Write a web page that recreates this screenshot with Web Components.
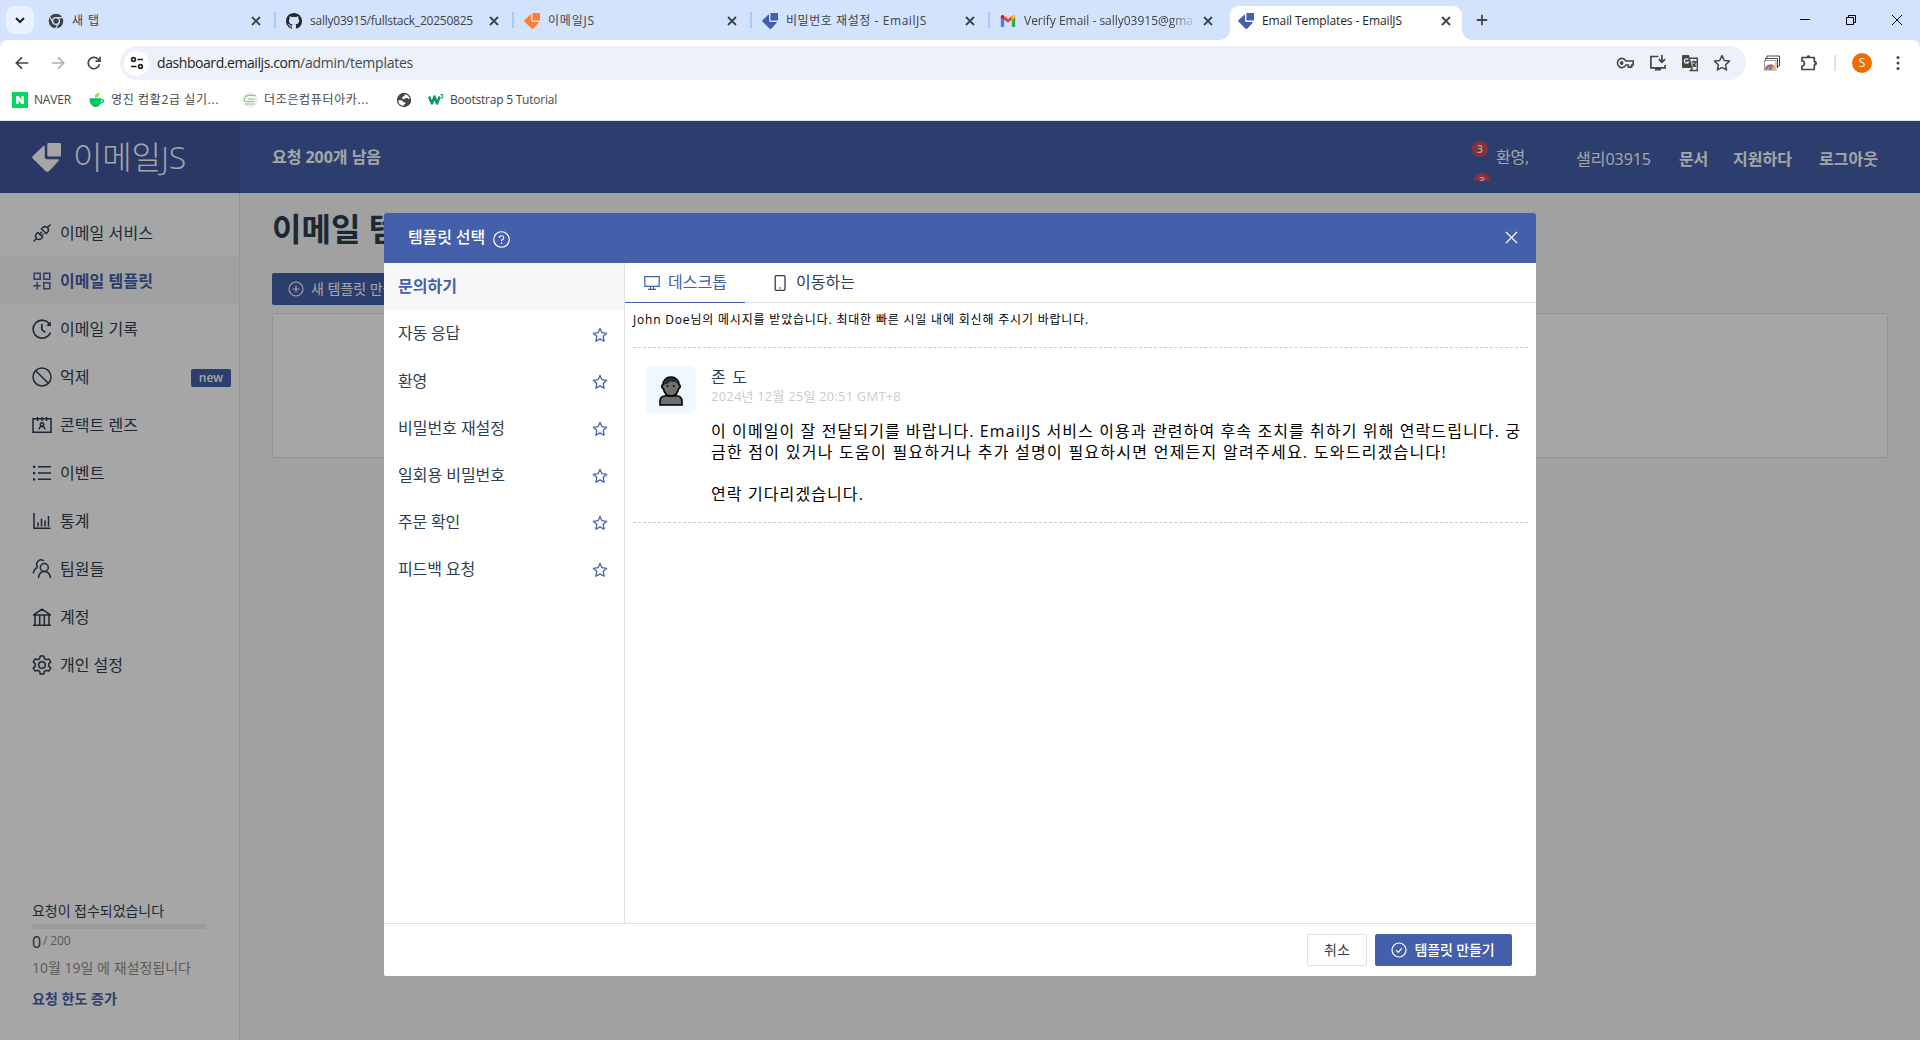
<!DOCTYPE html>
<html lang="ko">
<head>
<meta charset="utf-8">
<title>Email Templates - EmailJS</title>
<style>
html,body{margin:0;height:100%;overflow:hidden}
body{font-family:"Open Sans","Noto Sans CJK KR",sans-serif;color:#2c3e50;font-size:16px}
</style>
</head>
<body>
<browser-window></browser-window>
<script>
const define = (name, html, init) => customElements.define(name, class extends HTMLElement {
  connectedCallback() {
    if (this.shadowRoot) return;
    const root = this.attachShadow({mode: 'open'});
    const t = document.createElement('template');
    t.innerHTML = typeof html === 'function' ? html(this) : html;
    root.appendChild(t.content.cloneNode(true));
    if (init) init(this, root);
  }
});

/* Single-line label tracked out to the width given in "w". */
define('fit-text', '<style>:host{display:inline-block;white-space:pre;line-height:1.4;flex:none}</style><slot></slot>', el => {
  const w = parseFloat(el.getAttribute('w'));
  if (!w) return;
  const natural = el.getBoundingClientRect().width;
  el.style.letterSpacing = ((w - natural) / el.textContent.length).toFixed(3) + 'px';
});

const S = 'fill="none" stroke="currentColor" ';
const logo = '<rect x="15.3" y="0" width="13.7" height="13.6" rx="1"/><path d="M10.8 3.4Q12.8 1.8 12.8 4V13.8Q12.8 16.3 15.2 16.3H25.5Q28 16.3 26.3 18.2L17.2 28Q15.3 29.7 13.4 28L.8 15.6Q-.5 14.3 .8 13Z"/>';
const ICONS = {
  logo: ['29 29', logo],
  chevron: ['16 16', `<path ${S} stroke-width="2" d="M4 6l4 4 4-4"/>`],
  close: ['16 16', `<path ${S} stroke-width="1.8" d="M4 4l8 8M12 4l-8 8"/>`],
  plus: ['16 16', `<path ${S} stroke-width="1.8" d="M8 2.8v10.4M2.8 8h10.4"/>`],
  min: ['16 16', `<path ${S} d="M3 7.5h10"/>`],
  restore: ['16 16', `<path ${S} d="M3.5 5.5h7v7h-7zM5.5 5.5v-2h7v7h-2"/>`],
  wclose: ['16 16', `<path ${S} d="M3 3l10 10M13 3L3 13"/>`],
  chrome: ['16 16', '<circle cx="8" cy="8" r="7.3"/><g fill="none" stroke="#d3e3fd"><circle cx="8" cy="8" r="3.4" stroke-width="1.3"/><path stroke-width="1.1" d="M8 4.6h6.6M5 9.6L1.8 4M11 9.6L7.6 15.4"/></g>'],
  github: ['16 16', '<path fill-rule="evenodd" d="M8 0C3.58 0 0 3.58 0 8c0 3.54 2.29 6.53 5.47 7.59.4.07.55-.17.55-.38 0-.19-.01-.82-.01-1.49-2.01.37-2.53-.49-2.69-.94-.09-.23-.48-.94-.82-1.13-.28-.15-.68-.52-.01-.53.63-.01 1.08.58 1.23.82.72 1.21 1.87.87 2.33.66.07-.52.28-.87.51-1.07-1.78-.2-3.64-.89-3.64-3.95 0-.87.31-1.59.82-2.15-.08-.2-.36-1.02.08-2.12 0 0 .67-.21 2.2.82a7.6 7.6 0 014 0c1.53-1.04 2.2-.82 2.2-.82.44 1.1.16 1.92.08 2.12.51.56.82 1.27.82 2.15 0 3.07-1.87 3.75-3.65 3.95.29.25.54.73.54 1.48 0 1.07-.01 1.93-.01 2.2 0 .21.15.46.55.38A8.01 8.01 0 0016 8c0-4.42-3.58-8-8-8z"/>'],
  gmail: ['16 16', '<path fill="#4285f4" d="M.8 4v9.2q0 .8.8.8h2.6V6.6z"/><path fill="#34a853" d="M15.2 4v9.2q0 .8-.8.8h-2.6V6.6z"/><path fill="#ea4335" d="M4.2 6.8V2.9L8 5.9l3.8-3v3.9L8 9.8z"/><path fill="#c5221f" d="M.8 3.8v1L4.2 7V2.9L3.4 2.3C2.3 1.5.8 2.3.8 3.8z"/><path fill="#fbbc04" d="M15.2 3.8v1L11.8 7V2.9l.8-.6c1.1-.8 2.6 0 2.6 1.500z"/>'],
  back: ['16 16', `<path ${S} stroke-width="1.7" d="M14.300 8H2.500M8 2.300L2.300 8 8 13.700"/>`],
  forward: ['16 16', `<path ${S} stroke-width="1.7" d="M1.700 8h11.800M8 2.300L13.700 8 8 13.700"/>`],
  reload: ['16 16', `<path ${S} stroke-width="1.700" d="M13.500 9.300A5.700 5.700 0 1112 4l1.800 1.900M14 1.700V6.200H9.500"/>`],
  tune: ['16 16', `<g ${S} stroke-width="1.600"><circle cx="4.500" cy="4.500" r="1.900"/><path d="M8.500 4.500H14M2 11.500h5.500"/><circle cx="11.500" cy="11.500" r="1.900"/></g>`],
  key: ['20 16', `<g ${S} stroke-width="1.700"><path d="M10.300 6A4.600 4.600 0 1010.300 10H13v2.200h3.400V10h1.700V6z"/></g><circle cx="6" cy="8" r="1.900"/>`],
  install: ['18 18', `<path ${S} stroke-width="1.700" d="M9.500 2.500H1.900v11.300h14.200V11M12.900 1v7M9.700 5.200l3.200 3.200 3.200-3.200"/><path d="M6 14h6v2.500H6z"/>`],
  translate: ['18 18', `<path d="M2 1h6l3.500 13H2.200Q1 14 1 12.800V2.200Q1 1 2 1z"/><path ${S} stroke-width="1.400" d="M9 4.200h7.300V16.500H9.500l2-2.500M10.500 8h5M13 6.500V8M15 8q-1 3-3.500 4.500M11.500 9.500q1.500 2 3.500 3"/><path fill="none" stroke="#edf1fa" stroke-width="1.200" d="M7.300 5.700A2.200 2.200 0 107.500 8H5.500"/>`],
  star: ['16 16', `<path ${S} stroke-width="1.300" stroke-linejoin="round" d="M8 1.400l2 4.300 4.700.6-3.500 3.200.9 4.700L8 11.900l-4.100 2.300.9-4.700L1.300 6.300 6 5.700z"/>`],
  photos: ['18 18', `<path ${S} d="M4 4.500V2h12.500v10H14M2.500 7V4.500H14.500V14" stroke="#777"/><rect x="1.500" y="6.500" width="11.500" height="9.500" fill="#fff" stroke="#999"/><path fill="none" stroke="#ea4335" stroke-width="2.200" d="M3.500 15a4 4 0 017.500-1.500"/><path fill="#34a853" d="M2.500 12l2 4h-2z"/><path fill="#fbbc04" d="M10 12l2 1v3H9z"/><circle cx="7.300" cy="14.300" r="2" fill="#4285f4"/>`],
  puzzle: ['18 18', `<path ${S} stroke-width="1.700" stroke-linejoin="round" d="M2 3.500h12.300v4a1.700 1.700 0 010 3.500v4.500H2V12a2.500 2.500 0 000-5z"/><path d="M6.500 3.500a1.900 2.300 0 013.800 0zM14.500 7.400a2.300 1.900 0 010 3.800z"/>`],
  dots: ['16 16', '<circle cx="8" cy="2.600" r="1.500"/><circle cx="8" cy="8" r="1.500"/><circle cx="8" cy="13.400" r="1.500"/>'],
  naver: ['16 16', '<rect width="16" height="16" fill="#03d85c"/><path fill="#fff" d="M4 4h2.600l2.800 4V4H12v8H9.400L6.600 8v4H4z"/>'],
  cup: ['16 16', '<path fill="#8be04e" d="M6 5.500Q5 2 10.500.8 10.500 4 8 5.500z"/><path fill="#00c660" d="M.5 6.200H12V7q3.200-.4 3.200 2T11.500 11.500Q10 15 6.300 15 .5 14 .5 6.200zM12 8.300V10q1.700 0 1.700-1T12 8.300z"/>'],
  academy: ['16 16', '<circle cx="8" cy="8" r="7" fill="#f7faf5" stroke="#e4eae2"/><path fill="none" stroke="#8fba8a" stroke-width="1.100" d="M14 4Q5 1.500 2.800 6T7 9.500h5.500M3 12h9.500M6 7h7"/>'],
  globe: ['16 16', '<circle cx="8" cy="8" r="7.200"/><path fill="#fff" d="M8.500 2.300Q13 3 13.700 7q-1.700.4-2.200-1H9.700Q9 7.500 7.500 7.300L5.700 6Q6.500 4.300 8.500 4zM2.200 8.300H5q2 .2 2.300 2h2v1.500q-1.500.5-1.800 2.200Q2.600 13.400 2.200 8.300z"/>'],
  w3: ['16 16', '<path fill="none" stroke="#059862" stroke-width="2.400" stroke-linejoin="round" d="M1 4.500l3 7 2.500-7 2.500 7 2.700-7"/><path fill="none" stroke="#059862" stroke-width="1" d="M12.500 2.500h2.500l-1.300 1.500q1.500.2 1.300 1.500-.7 1.300-2.300.5"/>'],
  plug: ['20 20', `<g ${S} stroke-width="1.400"><path d="M1.500 18.500l3-3M15.500 4.500l3-3M4.500 15.500q-2-2.500-.2-4.500l1.600-1.600 4.700 4.700-1.600 1.600q-2 1.800-4.500-.2zM15.500 4.500q2 2.500.2 4.500l-1.600 1.600-4.700-4.700L11 4.300q2-1.800 4.500.2zM7.500 11l2-2M9.400 12.700l2-2"/></g>`],
  template: ['20 20', `<path ${S} stroke-width="1.500" d="M2.200 2.200h6v6h-6zM11.800 2.200h6v6h-6zM11.800 11.800h6v6h-6zM5.200 11v7.500M1.200 14.800h7.500"/>`],
  history: ['20 20', `<path ${S} stroke-width="1.600" d="M17.500 5A9 9 0 1018.500 13.500M9.800 5v5.700l3.500 2.600"/><path d="M18.800 2.500v4.800l-4.500-.6z"/>`],
  ban: ['20 20', `<g ${S} stroke-width="1.500"><circle cx="10" cy="10" r="9"/><path d="M3.700 3.700l12.600 12.600"/></g>`],
  contact: ['20 20', `<g ${S} stroke-width="1.500"><path d="M1 3.800h18v13.400H1zM5.500 2v4M10 2v4M14.500 2v4" /><circle cx="10" cy="9.500" r="1.700"/><path stroke-width="1.300" d="M7 14.500q.2-3 3-3t3 3"/></g>`],
  list: ['20 20', `<path ${S} stroke-width="1.500" d="M6 3.700h13M6 10h13M6 16.300h13"/><path d="M1 2.700h2.200v2.200H1zM1 9h2.200v2.200H1zM1 15.300h2.200v2.200H1z"/>`],
  chart: ['20 20', `<path ${S} stroke-width="1.500" d="M2 2v15.300h16.500M6 15.500v-4M9.500 15.500V7.500M13 15.500V9.500M16.500 15.500V5"/>`],
  team: ['20 20', `<g ${S} stroke-width="1.500"><circle cx="12.300" cy="8.500" r="4"/><path d="M6.500 19q.5-6.500 5.800-6.500T18.500 19M12 2Q8.500-.5 6 2.200T5.500 8.500M5.500 8.500Q1.800 10 1.300 14.500"/></g>`],
  bank: ['20 20', `<path ${S} stroke-width="1.500" d="M1 18.300h18M1 8h18M2 7.700L10 2.200l8 5.500M3 8v10M7.700 8v10M12.300 8v10M17 8v10"/>`],
  gear: ['20 20', `<g ${S} stroke-width="1.500" stroke-linejoin="round"><circle cx="10" cy="10" r="3.300"/><path d="M8.200 1h3.600l.6 2.700 1.700 1 2.700-.8 1.900 3.100-2 1.900v2.200l2 1.900-1.900 3.100-2.700-.8-1.700 1-.6 2.700H8.200l-.6-2.700-1.700-1-2.700.8-1.900-3.100 2-1.900V8.900l-2-1.900 1.900-3.100 2.700.8 1.700-1z"/></g>`],
  pluscircle: ['16 16', `<g ${S} stroke-width="1.100"><circle cx="8" cy="8" r="7"/><path d="M8 4.700v6.600M4.700 8h6.600"/></g>`],
  checkcircle: ['16 16', `<g ${S} stroke-width="1.200"><circle cx="8" cy="8" r="7"/><path d="M5 8.200l2.200 2.200 3.800-4.200"/></g>`],
  help: ['16 16', `<g ${S} stroke-width="1.100"><circle cx="8" cy="8" r="7.300"/><path d="M5.900 6.600Q5.900 4.500 8 4.500T10.100 6.400Q10.100 7.600 8.800 8.100 8 8.500 8 9.700"/></g><circle cx="8" cy="11.600" r=".75"/>`],
  dialogx: ['16 16', `<path ${S} stroke-width="1.500" d="M2 2l12 12M14 2L2 14"/>`],
  desktop: ['16 16', `<path ${S} stroke-width="1.200" d="M.8 1.700h14.400v9.600H.8zM4 14.300h8M6.500 11.300v3M9.500 11.300v3"/>`],
  phone: ['16 16', `<rect x="3.200" y=".7" width="9.800" height="14.600" rx="1" ${S} stroke-width="1.300"/><circle cx="8" cy="13" r=".8"/>`],
  person: ['24 30', '<g stroke="#000" stroke-width="1.600"><path fill="#707070" d="M1 29v-3.500Q1 20 7 19.800h10q6 .2 6 5.700V29z"/><path fill="#707070" d="M12 1c4.700 0 8 3.300 8 7.800 1.700 0 1.700 3.500-.3 3.700C18.800 17 15.800 20 12 20s-6.800-3-7.700-7.500c-2-.2-2-3.700-.3-3.700C4 4.300 7.300 1 12 1z"/></g><path fill="#2b2b2b" d="M4.600 8.500Q5 1.800 12 1.700t7.400 6.800Q18 8 16.800 5.700 14 6.500 11.500 5.300 9.500 8.300 4.600 8.500z"/><circle cx="8.600" cy="10" r=".9"/><circle cx="14.800" cy="10" r=".9"/>']
};
define('ui-icon', el => {
  const [box, body] = ICONS[el.getAttribute('name')];
  const w = el.getAttribute('w') || 16, h = el.getAttribute('h') || w;
  return `<style>:host{display:inline-flex;flex:none}svg{display:block}</style><svg width="${w}" height="${h}" viewBox="0 0 ${box}" preserveAspectRatio="none" fill="currentColor">${body}</svg>`;
});

define('browser-tab', `<style>
:host{display:flex;align-items:center;box-sizing:border-box;width:238px;height:34px;padding-left:11px;margin-top:6px;position:relative;font-size:12px;color:#3f4246;flex:none}
.label{flex:1;padding-left:8px;min-width:0;overflow:hidden;display:flex;height:20px;align-items:center}
.x{margin-right:10px;color:#3f4246}
.sep{width:2px;height:16px;background:#a8c7fa;margin:0 -1px 6px 0}
ui-icon,::slotted(ui-icon){margin-bottom:5px}
.label{margin-bottom:4px}
:host([active]){width:232px;margin-left:3px;padding-left:8px;background:#fff;border-radius:9px 9px 0 0;color:#1f1f1f}
:host([active]) .sep{visibility:hidden}
:host([active]) .x{margin-right:7px}
:host([active])::before,:host([active])::after{content:"";position:absolute;bottom:0;width:10px;height:10px;left:-10px;background:radial-gradient(circle at 0 0,transparent 9.500px,#fff 10px)}
:host([active])::after{left:auto;right:-10px;background:radial-gradient(circle at 100% 0,transparent 9.500px,#fff 10px)}
:host([last]) .sep{visibility:hidden}
:host([fade]) .label{-webkit-mask-image:linear-gradient(90deg,#000 154px,transparent 182px)}
</style><slot name="icon"></slot><div class="label"><slot></slot></div><ui-icon class="x" name="close"></ui-icon><div class="sep"></div>`);

define('browser-chrome', `<style>
:host{display:block;background:#fff;height:121px;color:#444746}
.strip{display:flex;height:40px;background:#d3e3fd}
.search{width:28px;height:28px;margin:6px 3px 0 6px;border-radius:9px;background:#e9f1fe;display:flex;align-items:center;justify-content:center;color:#1f1f1f}
.new{margin:12px 0 0 12px;color:#444}
.win{margin-left:auto;display:flex;gap:30px;padding:12px 15px 0 0;color:#000}
.barwrap{background:#d3e3fd}
.bar{display:flex;height:46px;background:#fff;border-radius:8px 8px 0 0;align-items:center}
.nav{display:flex;gap:20px;padding-left:14px;width:106px;flex:none}
.omni{box-sizing:border-box;width:1626px;height:34px;border-radius:17px;background:#edf1fa;display:flex;align-items:center;padding:0 15px 0 4px;font-size:14px;color:#1f1f1f}
.site{width:25px;height:25px;border-radius:50%;background:#fff;display:flex;align-items:center;justify-content:center;margin-right:8px}
.acts{margin-left:auto;display:flex;align-items:center;gap:14px;color:#444746}
.right{display:flex;align-items:center;padding-left:17px}
.av{width:20px;height:20px;border-radius:50%;background:#ef6c00;color:#fff;font:12px/20px "Open Sans",sans-serif;text-align:center}
.marks{display:flex;align-items:center;height:24px;padding-left:12px;font-size:12px;padding-top:2px}
.marks ui-icon{margin-right:6px}
.line{height:1px;background:#e0e4ea;margin-top:8px}
</style>
<div class="strip"><div class="search"><ui-icon name="chevron"></ui-icon></div>
<browser-tab><ui-icon slot="icon" name="chrome"></ui-icon><fit-text w="28">새 탭</fit-text></browser-tab>
<browser-tab><ui-icon slot="icon" name="github" style="color:#24292f"></ui-icon><fit-text w="163">sally03915/fullstack_20250825</fit-text></browser-tab>
<browser-tab><ui-icon slot="icon" name="logo" style="color:#ff7f32"></ui-icon><fit-text w="47">이메일JS</fit-text></browser-tab>
<browser-tab><ui-icon slot="icon" name="logo" style="color:#4460aa"></ui-icon><fit-text w="141">비밀번호 재설정 - EmailJS</fit-text></browser-tab>
<browser-tab last fade><ui-icon slot="icon" name="gmail"></ui-icon><fit-text w="169">Verify Email - sally03915@gma</fit-text></browser-tab>
<browser-tab active><ui-icon slot="icon" name="logo" style="color:#4460aa"></ui-icon><fit-text w="140">Email Templates - EmailJS</fit-text></browser-tab>
<ui-icon class="new" name="plus"></ui-icon>
<div class="win"><ui-icon name="min"></ui-icon><ui-icon name="restore"></ui-icon><ui-icon name="wclose"></ui-icon></div></div>
<div class="barwrap"><div class="bar"><div class="nav"><ui-icon name="back"></ui-icon><ui-icon name="forward" style="color:#b0b2b2"></ui-icon><ui-icon name="reload"></ui-icon></div>
<div class="omni"><div class="site"><ui-icon name="tune"></ui-icon></div><fit-text w="143">dashboard.emailjs.com</fit-text><fit-text w="113" style="color:#474747">/admin/templates</fit-text>
<div class="acts"><ui-icon name="key" w="19" h="16"></ui-icon><ui-icon name="install" w="18"></ui-icon><ui-icon name="translate" w="18"></ui-icon><ui-icon name="star" w="18"></ui-icon></div></div>
<div class="right"><ui-icon name="photos" w="18"></ui-icon><ui-icon name="puzzle" w="18" style="margin-left:19px"></ui-icon><div style="width:2px;height:16px;background:#d3e3fd;margin:0 16px 0 16px"></div><div class="av">S</div><ui-icon name="dots" style="margin-left:18px"></ui-icon></div></div></div>
<div class="marks"><ui-icon name="naver"></ui-icon><fit-text w="37">NAVER</fit-text>
<ui-icon name="cup" style="margin-left:18px"></ui-icon><fit-text w="108">영진 컴활2급 실기...</fit-text>
<ui-icon name="academy" style="margin-left:23px"></ui-icon><fit-text w="105">더조은컴퓨터아카...</fit-text>
<ui-icon name="globe" style="margin-left:27px"></ui-icon><ui-icon name="w3" style="margin-left:10px"></ui-icon><fit-text w="107">Bootstrap 5 Tutorial</fit-text></div>
<div class="line"></div>`);

define('top-bar', `<style>
:host{display:flex;height:72px;background:#4460aa;color:#fff;font-size:16px}
.brand{box-sizing:border-box;width:240px;background:#41569b;display:flex;align-items:center;padding-left:32px;gap:12px;font-size:32px;font-weight:300}
.left{padding-left:32px;display:flex;align-items:center;font-weight:700}
.right{margin-left:auto;display:flex;align-items:center;padding-right:42px}
b{font-weight:700;display:flex;margin-top:4px}
.badges{width:18px;height:60px;overflow:hidden;margin-right:6px;align-self:flex-start;padding-top:20px;box-sizing:border-box}
.n{width:16px;height:16px;border-radius:50%;background:#d44a5c;font:600 11px/16px "Open Sans",sans-serif;text-align:center}
</style>
<div class="brand"><ui-icon name="logo" w="29"></ui-icon><fit-text w="113" style="font-weight:200;font-family:'Open Sans Light','Open Sans','Noto Sans CJK KR',sans-serif">이메일JS</fit-text></div>
<div class="left"><fit-text w="109">요청 200개 남음</fit-text></div>
<div class="right"><div class="badges"><div class="n">3</div><div class="n" style="margin:16px 0 0 2px">3</div></div>
<fit-text w="33">환영,</fit-text><fit-text w="75" style="margin:4px 28px 0 47px">샐리03915</fit-text><b><fit-text w="29">문서</fit-text></b><b style="margin-left:25px"><fit-text w="59">지원하다</fit-text></b><b style="margin-left:27px"><fit-text w="59">로그아웃</fit-text></b></div>`);

define('nav-item', el => `<style>
:host{display:flex;align-items:center;height:48px;padding-left:32px;box-sizing:border-box;color:#2c3e50}
:host([active]){background:#f7f7f7;color:#4460aa;font-weight:700}
ui-icon{margin-right:8px}
.tag{margin:2px 8px 0 auto;width:40px;height:18px;border-radius:2px;background:#4460aa;color:#fff;font:600 12px/17px "Open Sans",sans-serif;text-align:center}
</style><ui-icon name="${el.getAttribute('icon')}" w="20"></ui-icon><slot></slot>${el.hasAttribute('tag') ? `<span class="tag">${el.getAttribute('tag')}</span>` : ''}`);

define('side-nav', `<style>
:host{display:flex;flex-direction:column;width:240px;box-sizing:border-box;border-right:1px solid #e4e4e4;background:#fff;padding-top:16px}
.quota{margin-top:auto;padding:0 0 31px 32px;font-size:14px;display:flex;flex-direction:column;align-items:flex-start}
.track{width:175px;height:5px;border-radius:3px;background:#efefef;margin-top:3px}
</style>
<nav-item icon="plug"><fit-text w="93">이메일 서비스</fit-text></nav-item>
<nav-item icon="template" active><fit-text w="93">이메일 템플릿</fit-text></nav-item>
<nav-item icon="history"><fit-text w="78">이메일 기록</fit-text></nav-item>
<nav-item icon="ban" tag="new"><fit-text w="29.500">억제</fit-text></nav-item>
<nav-item icon="contact"><fit-text w="78">콘택트 렌즈</fit-text></nav-item>
<nav-item icon="list"><fit-text w="44.500">이벤트</fit-text></nav-item>
<nav-item icon="chart"><fit-text w="29.500">통계</fit-text></nav-item>
<nav-item icon="team"><fit-text w="44.500">팀원들</fit-text></nav-item>
<nav-item icon="bank"><fit-text w="29.500">계정</fit-text></nav-item>
<nav-item icon="gear"><fit-text w="63">개인 설정</fit-text></nav-item>
<div class="quota"><fit-text w="132">요청이 접수되었습니다</fit-text><div class="track"></div>
<div style="display:flex;align-items:center;height:26px;gap:2px"><fit-text w="9" style="font-size:16px">0</fit-text><fit-text w="27.500" style="font-size:12px;color:#888;margin-bottom:1px">/ 200</fit-text></div>
<fit-text w="159" style="color:#8c8c8c;margin-top:3px">10월 19일 에 재설정됩니다</fit-text>
<fit-text w="85" style="color:#4460aa;font-weight:700;margin-top:12px">요청 한도 증가</fit-text></div>`);

define('main-panel', `<style>
:host{display:block;background:#f8f8f8;flex:1;padding:13px 32px 0}
h1{margin:0;font-size:32px;font-weight:700;line-height:46px;height:46px}
.btn{display:flex;align-items:center;width:166px;height:32px;box-sizing:border-box;margin-top:21px;padding-left:16px;gap:7px;border-radius:2px;background:#4460aa;color:#fff;font-size:14px}
.card{height:145px;box-sizing:border-box;margin-top:8px;border:1px solid #e4e4e4;border-radius:2px;background:#fff}
</style><h1><fit-text w="185">이메일 템플릿</fit-text></h1>
<div class="btn"><ui-icon name="pluscircle"></ui-icon><fit-text>새 템플릿 만들기</fit-text></div><div class="card"></div>`);

define('template-row', `<style>
:host{display:flex;align-items:center;justify-content:space-between;height:47.140px;padding:0 16px 0 14px;box-sizing:border-box;color:#2c3e50;font-size:16px}
:host([active]){background:#f7f7f7;color:#4460aa;font-weight:700}
:host([active]) ui-icon{display:none}
ui-icon{color:#4460aa;margin-top:2px}
</style><slot></slot><ui-icon name="star"></ui-icon>`);

define('mail-preview', `<style>
:host{display:block;padding:0 8px;color:#000}
.intro{font-size:12px;height:44px;padding-top:8px;box-sizing:border-box}
.msg{display:flex;height:176px;box-sizing:border-box;border-top:1px dashed #ccc;border-bottom:1px dashed #ccc;padding:18px 0 0 13px}
.pic{width:50px;height:47px;border-radius:5px;background:#eff7ff;display:flex;align-items:flex-end;justify-content:center;padding-bottom:7px;box-sizing:border-box;margin-right:15px}
.text{display:flex;flex-direction:column;align-items:flex-start}
.l{line-height:21px;font-size:16px}
</style>
<div class="intro"><fit-text w="456">John Doe님의 메시지를 받았습니다. 최대한 빠른 시일 내에 회신해 주시기 바랍니다.</fit-text></div>
<div class="msg"><div class="pic"><ui-icon name="person" w="24" h="30"></ui-icon></div>
<div class="text"><fit-text w="37" style="color:#2c3e50;line-height:22px">존 도</fit-text><fit-text w="190" style="color:#ccc;font-size:13px;line-height:16px">2024년 12월 25일 20:51 GMT+8</fit-text>
<fit-text class="l" w="810" style="margin-top:17px">이 이메일이 잘 전달되기를 바랍니다. EmailJS 서비스 이용과 관련하여 후속 조치를 취하기 위해 연락드립니다. 궁</fit-text>
<fit-text class="l" w="736">금한 점이 있거나 도움이 필요하거나 추가 설명이 필요하시면 언제든지 알려주세요. 도와드리겠습니다!</fit-text>
<fit-text class="l" w="153" style="margin-top:21px">연락 기다리겠습니다.</fit-text></div></div>`);

define('template-dialog', `<style>
:host{display:flex;flex-direction:column;width:1152px;height:763px;background:#fff;border-radius:2px;overflow:hidden}
header{display:flex;align-items:center;height:50px;background:#4460aa;color:#fff;padding:0 17px 0 24px;font-weight:500;font-size:16px}
.body{display:flex;flex:1}
.list{width:240px;border-right:1px solid #e0e0e0}
.view{flex:1}
.tabs{display:flex;height:40px;box-sizing:border-box;border-bottom:1px solid #e0e0e0;color:#2c3e50}
.tab{display:flex;align-items:center;box-sizing:border-box;height:40px;width:120px;padding:0 0 1px 19px;gap:8px}
.on{color:#4460aa;border-bottom:1px solid #4460aa;padding-bottom:0}
footer{display:flex;align-items:center;justify-content:flex-end;gap:8px;height:53px;box-sizing:border-box;border-top:1px solid #e0e0e0;padding-right:24px;font-size:14px}
.b{display:flex;align-items:center;justify-content:center;box-sizing:border-box;height:32px;border:1px solid #e0e0e0;border-radius:2px;width:60px}
.p{width:137px;background:#4460aa;border-color:#4460aa;color:#fff;gap:8px;font-weight:500;padding-right:2px}
</style>
<header><fit-text w="77" style="margin-bottom:1px">템플릿 선택</fit-text><ui-icon name="help" w="17" style="margin:2px auto 0 8px"></ui-icon><ui-icon name="dialogx" w="15" style="margin-bottom:2px"></ui-icon></header>
<div class="body"><div class="list">
<template-row active><fit-text w="59">문의하기</fit-text></template-row>
<template-row><fit-text w="62">자동 응답</fit-text></template-row>
<template-row><fit-text w="29">환영</fit-text></template-row>
<template-row><fit-text w="107">비밀번호 재설정</fit-text></template-row>
<template-row><fit-text w="107">일회용 비밀번호</fit-text></template-row>
<template-row><fit-text w="62">주문 확인</fit-text></template-row>
<template-row><fit-text w="77">피드백 요청</fit-text></template-row>
</div><div class="view"><div class="tabs"><div class="tab on"><ui-icon name="desktop"></ui-icon><fit-text w="59">데스크톱</fit-text></div><div class="tab" style="padding-left:27px"><ui-icon name="phone"></ui-icon><fit-text w="59">이동하는</fit-text></div></div><mail-preview></mail-preview></div></div>
<footer><div class="b"><fit-text w="26">취소</fit-text></div><div class="b p"><ui-icon name="checkcircle"></ui-icon><fit-text w="80">템플릿 만들기</fit-text></div></footer>`);

define('app-page', `<style>
:host{display:flex;flex-direction:column;flex:1;position:relative}
.row{display:flex;flex:1}
.shade{position:absolute;inset:0;background:rgba(0,0,0,.35);display:flex;justify-content:center;align-items:flex-start;padding-top:92px}
</style><top-bar></top-bar><div class="row"><side-nav></side-nav><main-panel></main-panel></div>
<div class="shade"><template-dialog></template-dialog></div>`);

define('browser-window', `<style>:host{display:flex;flex-direction:column;width:1920px;height:1040px;overflow:hidden}</style><browser-chrome></browser-chrome><app-page></app-page>`);
</script>
</body>
</html>
